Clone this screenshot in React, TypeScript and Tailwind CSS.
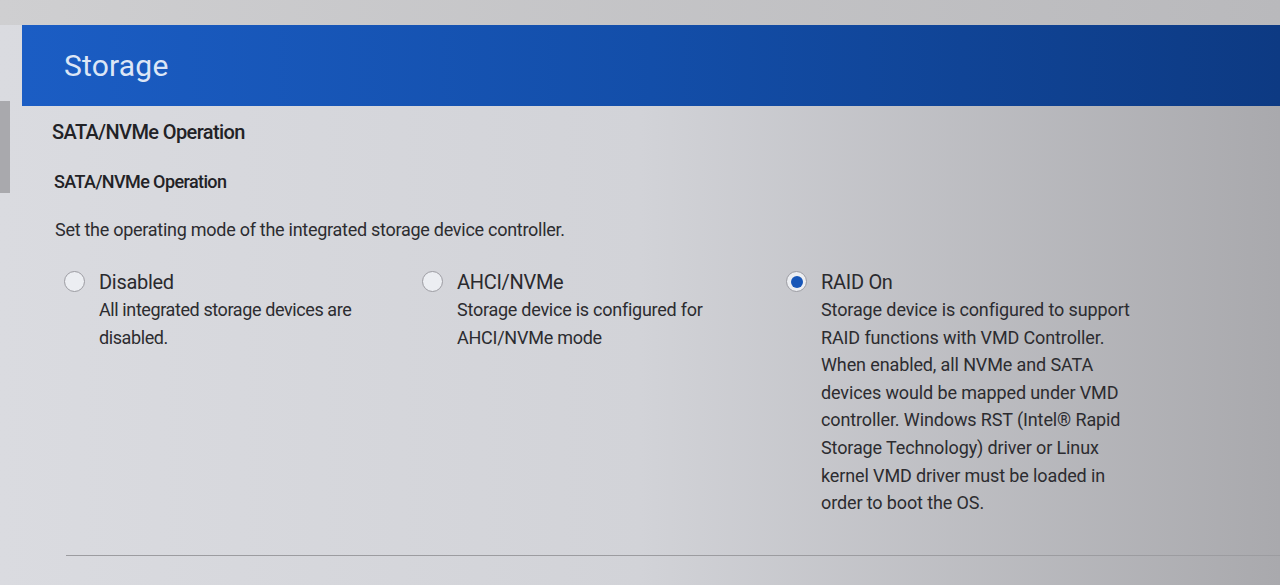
import React from 'react';

type Option = {
  id: string;
  label: string;
  desc: string[];
  selected?: boolean;
  width: string;
  track: string;
};

const options: Option[] = [
  {
    id: 'disabled',
    label: 'Disabled',
    desc: ['All integrated storage devices are', 'disabled.'],
    width: 'w-[358px]',
    track: 'tracking-[-0.4px]',
  },
  {
    id: 'ahci',
    label: 'AHCI/NVMe',
    desc: ['Storage device is configured for', 'AHCI/NVMe mode'],
    width: 'w-[364px]',
    track: 'tracking-[-0.25px]',
  },
  {
    id: 'raid',
    label: 'RAID On',
    selected: true,
    desc: [
      'Storage device is configured to support',
      'RAID functions with VMD Controller.',
      'When enabled, all NVMe and SATA',
      'devices would be mapped under VMD',
      'controller. Windows RST (Intel® Rapid',
      'Storage Technology) driver or Linux',
      'kernel VMD driver must be loaded in',
      'order to boot the OS.',
    ],
    width: 'w-[400px]',
    track: 'tracking-[-0.12px]',
  },
];

function Radio({ checked }: { checked?: boolean }) {
  return (
    <span className="mt-[2px] flex h-[21px] w-[21px] shrink-0 items-center justify-center rounded-full border-[1.5px] border-[#9c9ca2] bg-[#eceef2]">
      {checked && <span className="h-[12px] w-[12px] rounded-full bg-[#1756b8]" />}
    </span>
  );
}

export default function App() {
  return (
    <div
      className="h-[585px] w-[1280px] overflow-hidden bg-gradient-to-r from-[#dadbe0] via-[#d2d3d8] to-[#a9a9ad] text-[#2a2a2e]"
      style={{ fontFamily: 'Roboto, "Liberation Sans", sans-serif' }}
    >
      <div className="h-[25px] bg-gradient-to-r from-[#cfcfd1] to-[#b9b9bc]" />
      <div className="flex">
        {/* left gutter */}
        <div className="w-[22px] shrink-0 pt-[76px]">
          <div className="h-[92px] w-[10px] bg-[#a9a9ad]" />
        </div>

        {/* main panel */}
        <div className="flex-1">
          <div className="flex h-[81px] items-center bg-gradient-to-r from-[#1b5dc4] via-[#134ea9] to-[#0d3a83] pl-[42px]">
            <h1 className="text-[30px] leading-none tracking-[0.2px] text-[#dce6f6]">Storage</h1>
          </div>

          <div className="pl-[30px] pt-[14px]">
            <h2 className="text-[20px] font-medium leading-[24px] tracking-[-0.6px] text-[#222226]">
              SATA/NVMe Operation
            </h2>
            <h3 className="mt-[26px] pl-[2px] text-[18px] font-medium leading-[24px] tracking-[-0.6px] text-[#222226]">
              SATA/NVMe Operation
            </h3>
            <p className="mt-[24px] pl-[3px] text-[18px] leading-[24px] tracking-[-0.27px] text-[#2c2c30]">
              Set the operating mode of the integrated storage device controller.
            </p>

            <div className="mt-[27px] flex pl-[12px]">
              {options.map((o) => (
                <div key={o.id} className={`flex gap-[14px] ${o.width}`}>
                  <Radio checked={o.selected} />
                  <div>
                    <div className="text-[20px] leading-[26px] tracking-[-0.3px] text-[#2a2a2e]">{o.label}</div>
                    <div className={`mt-[1px] text-[18px] leading-[27.6px] text-[#2c2c30] ${o.track}`}>
                      {o.desc.map((l) => (
                        <div key={l}>{l}</div>
                      ))}
                    </div>
                  </div>
                </div>
              ))}
            </div>

            <div className="mt-[38px] ml-[14px] h-px bg-[#9c9ca0]" />
          </div>
        </div>
      </div>
    </div>
  );
}
